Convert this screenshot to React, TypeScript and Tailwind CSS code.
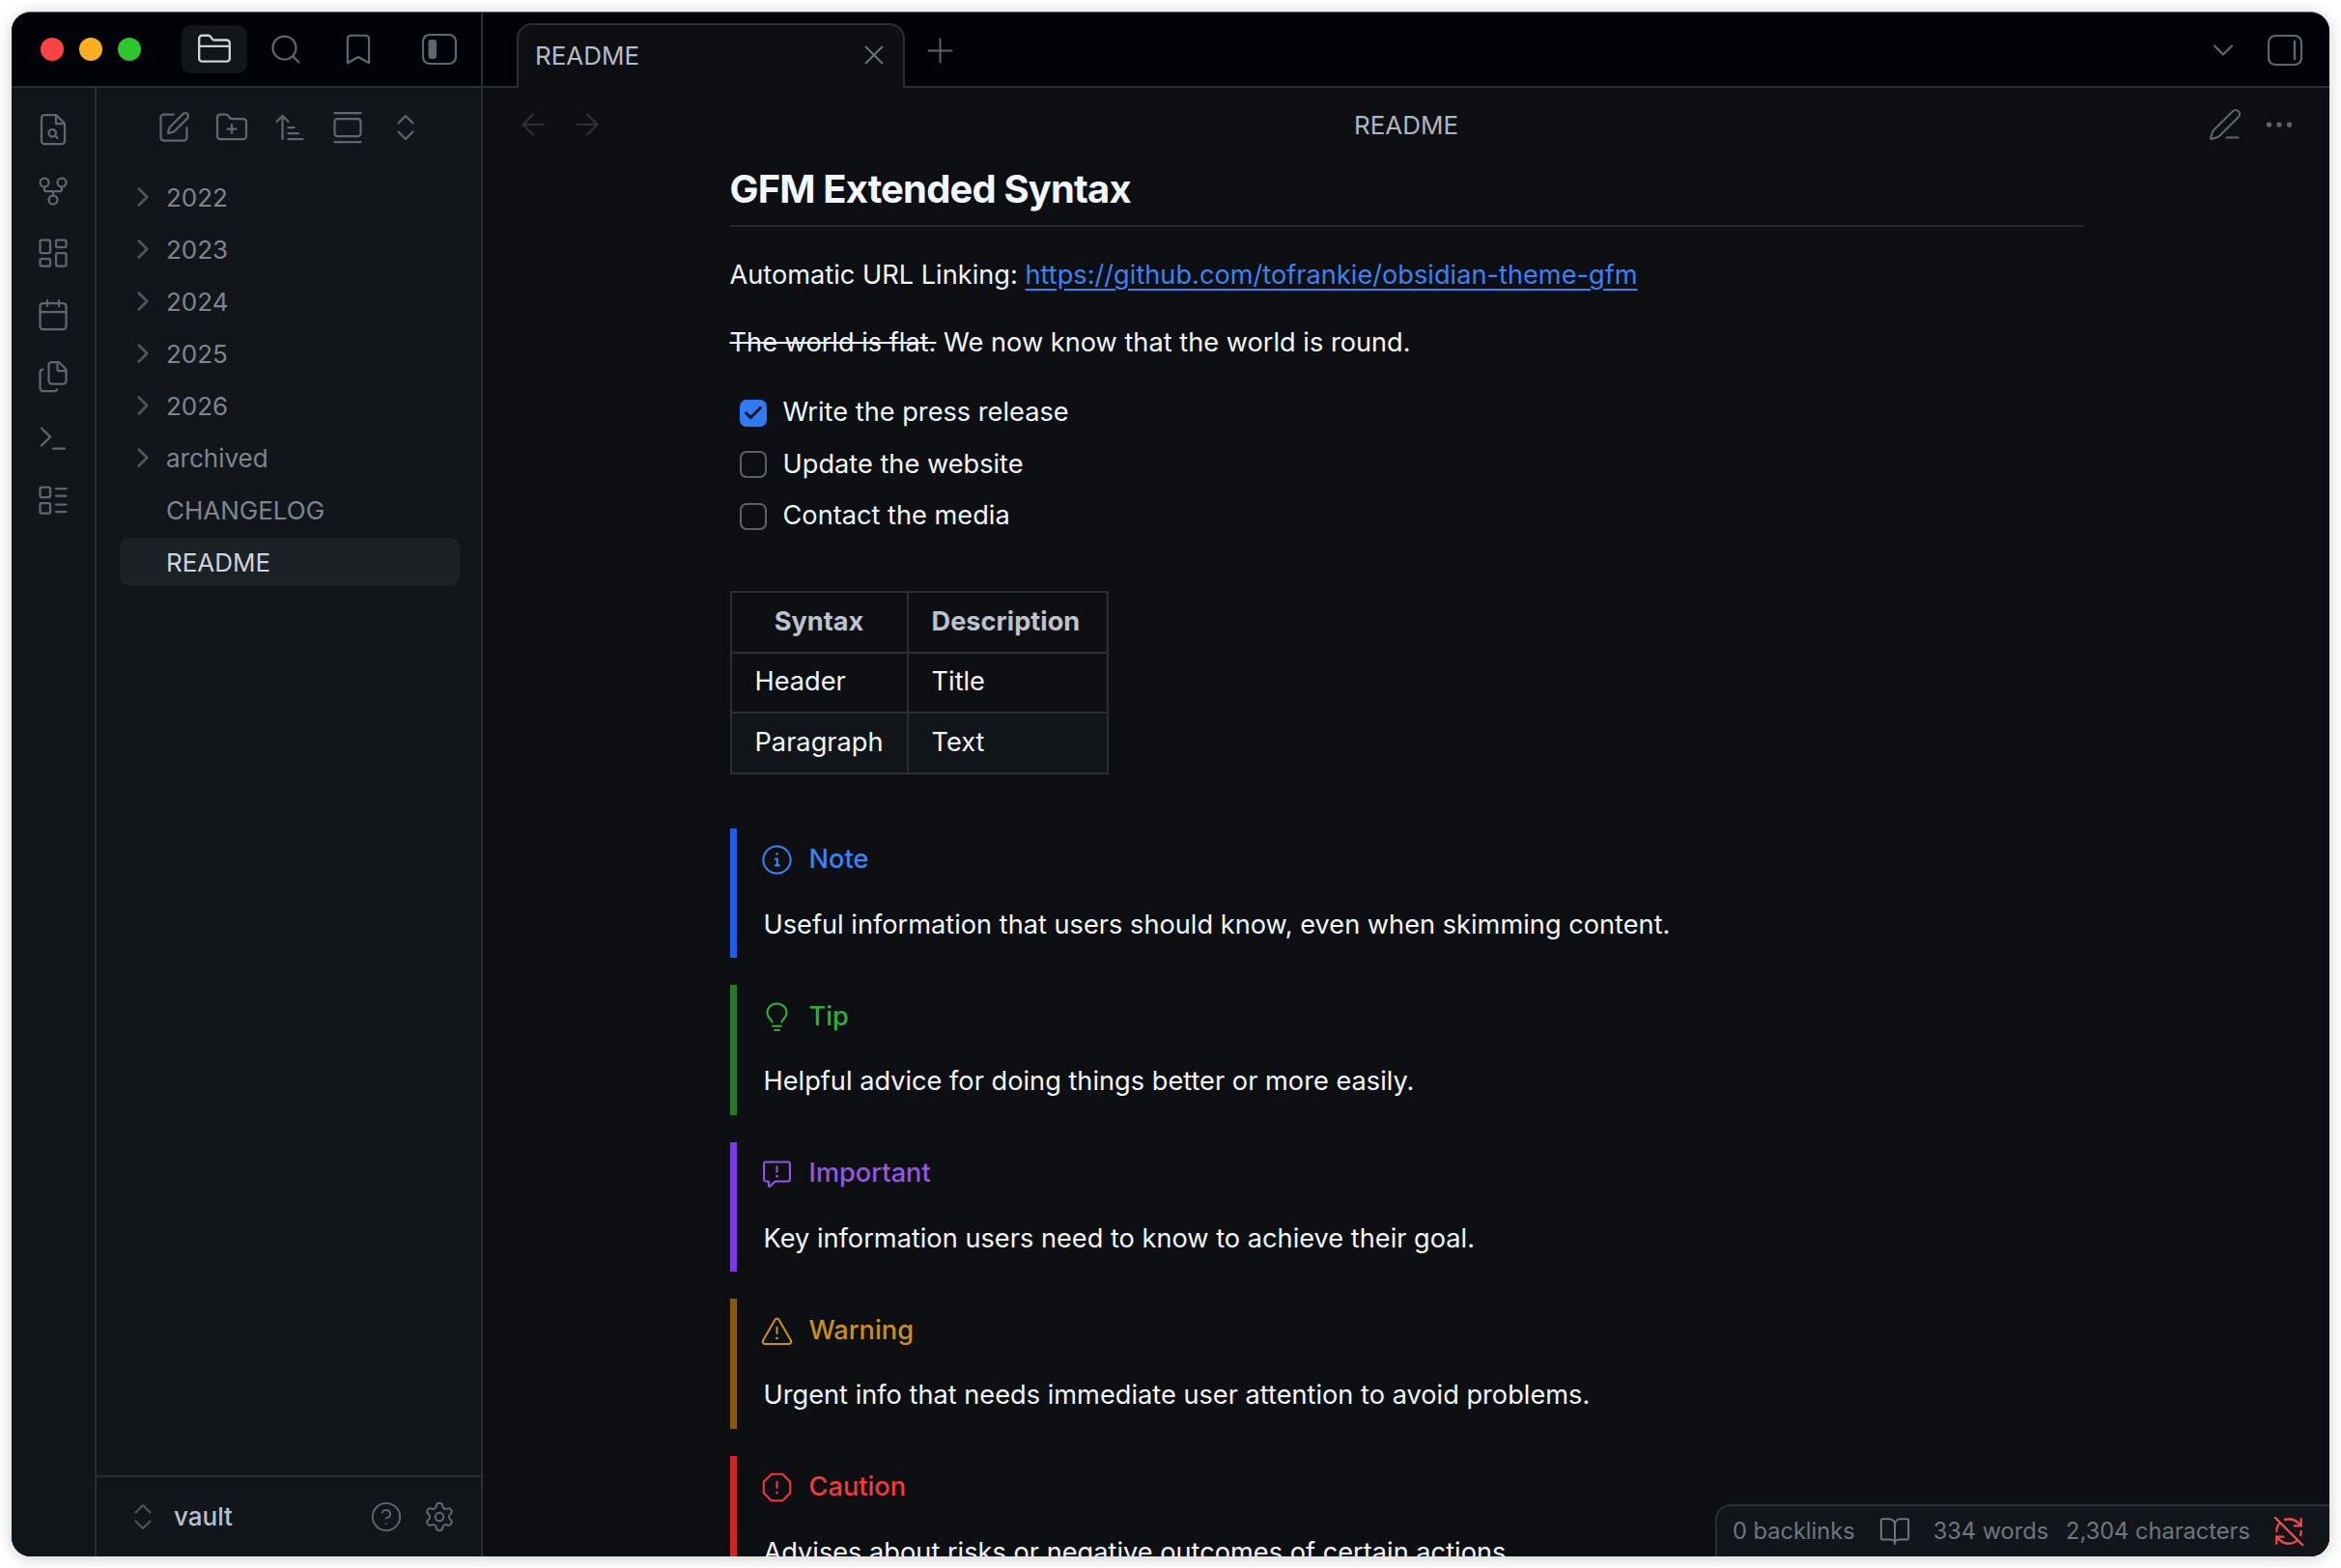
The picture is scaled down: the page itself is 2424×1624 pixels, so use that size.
import React from "react";
import {
  GitFork, LayoutDashboard, Calendar, Files, Terminal, LayoutList, SquarePen, FolderPlus, ArrowUpNarrowWide,
  GalleryVertical, ChevronsUpDown, ChevronRight, FolderClosed, Search, Bookmark, X, Plus, ArrowLeft, ArrowRight,
  ChevronDown, PenLine, Ellipsis, CircleHelp, Settings, BookOpen, RefreshCwOff, Check,
} from "lucide-react";
import { GoInfo, GoLightBulb, GoReport, GoAlert, GoStop } from "react-icons/go";

const FileSearchIcon = () => (
  <svg width="36" height="36" viewBox="0 0 24 24" fill="none" stroke="currentColor" strokeWidth="1.5" strokeLinecap="round" strokeLinejoin="round">
    <path d="M14 2H6a2 2 0 0 0-2 2v16a2 2 0 0 0 2 2h12a2 2 0 0 0 2-2V8z" />
    <path d="M14 2v6h6" />
    <circle cx="11.5" cy="14.5" r="2.5" />
    <path d="M13.3 16.3 15 18" />
  </svg>
);

const PanelLeft = () => (
  <svg width="36" height="34" viewBox="0 0 36 34" fill="none">
    <rect x="1" y="2" width="34" height="30" rx="7" stroke="currentColor" strokeWidth="2.2" />
    <rect x="6.5" y="7" width="8.5" height="20" rx="3" fill="currentColor" />
  </svg>
);

const PanelRight = () => (
  <svg width="36" height="34" viewBox="0 0 36 34" fill="none">
    <rect x="1" y="2" width="34" height="30" rx="7" stroke="currentColor" strokeWidth="2.2" />
    <path d="M28 8v18" stroke="currentColor" strokeWidth="2.4" strokeLinecap="round" />
  </svg>
);

const ribbon = [
  <FileSearchIcon key="a" />,
  <GitFork key="b" size={36} strokeWidth={1.5} />,
  <LayoutDashboard key="c" size={36} strokeWidth={1.5} />,
  <Calendar key="d" size={36} strokeWidth={1.5} />,
  <Files key="e" size={36} strokeWidth={1.5} />,
  <Terminal key="f" size={36} strokeWidth={1.5} />,
  <LayoutList key="g" size={36} strokeWidth={1.5} />,
];

const tree = ["2022", "2023", "2024", "2025", "2026", "archived"];

const callouts = [
  { title: "Note", body: "Useful information that users should know, even when skimming content.", bar: "border-[#1f5fe8]", text: "text-[#3b82f6]", icon: <GoInfo size={33} /> },
  { title: "Tip", body: "Helpful advice for doing things better or more easily.", bar: "border-[#277a2c]", text: "text-[#2fae3c]", icon: <GoLightBulb size={33} /> },
  { title: "Important", body: "Key information users need to know to achieve their goal.", bar: "border-[#7a3be0]", text: "text-[#9158e8]", icon: <GoReport size={33} /> },
  { title: "Warning", body: "Urgent info that needs immediate user attention to avoid problems.", bar: "border-[#8a5a0b]", text: "text-[#c98f1e]", icon: <GoAlert size={33} /> },
  { title: "Caution", body: "Advises about risks or negative outcomes of certain actions.", bar: "border-[#d0242b]", text: "text-[#ef3b3b]", icon: <GoStop size={33} /> },
];

export default function App() {
  return (
    <div className="w-[2424px] h-[1624px] bg-white p-[12px] overflow-hidden font-['Inter',sans-serif] text-[26px] font-[440] antialiased">
      <div className="relative w-full h-full rounded-[20px] overflow-hidden flex flex-col bg-[#0d0f13] border-t border-[#5c5f64] shadow-[0_2px_16px_rgba(0,0,0,0.2)]">
        {/* title bar */}
        <div className="h-[78px] shrink-0 flex bg-[#010308]">
          <div className="w-[488px] shrink-0 border-r-2 border-[#2a2e35] border-b-2 flex items-center pl-[30px]">
            <span className="w-[24px] h-[24px] rounded-full bg-[#ff4242]" />
            <span className="w-[24px] h-[24px] rounded-full bg-[#ffae22] ml-[16px]" />
            <span className="w-[24px] h-[24px] rounded-full bg-[#2ec52e] ml-[16px]" />
            <div className="ml-[42px] w-[68px] h-[50px] rounded-[10px] bg-[#12151a] flex items-center justify-center text-[#c9d1d9]">
              <FolderClosed size={38} strokeWidth={1.5} />
            </div>
            <div className="ml-[22px] text-[#5f6670]"><Search size={36} strokeWidth={1.5} /></div>
            <div className="ml-[38px] text-[#5f6670]"><Bookmark size={38} strokeWidth={1.4} /></div>
            <div className="ml-[47px] text-[#5f6670]"><PanelLeft /></div>
          </div>
          <div className="flex-1 flex relative items-end">
            <div className="w-[35px] h-[2px] bg-[#2a2e35]" />
            <div className="w-[402px] h-[67px] shrink-0 rounded-t-[16px] border-2 border-b-0 border-[#2a2e35] bg-[#0d0f13] flex items-center pl-[17px] pr-[13px] pb-[3px] text-[#b4bbc6]">
              <span className="flex-1">README</span>
              <X size={34} strokeWidth={1.4} className="text-[#6b727c]" />
            </div>
            <div className="flex-1 self-stretch flex items-center border-b-2 border-[#2a2e35] pl-[16px]">
              <Plus size={41} strokeWidth={1.1} className="mt-[2px] text-[#5f6670]" />
              <div className="ml-auto mr-[28px] mt-[2px] flex items-center gap-[28px] text-[#5f6670]">
                <ChevronDown size={36} strokeWidth={1.5} />
                <PanelRight />
              </div>
            </div>
          </div>
        </div>

        {/* body */}
        <div className="flex-1 flex min-h-0">
          {/* ribbon */}
          <div className="w-[88px] shrink-0 bg-[#12161b] border-r-2 border-[#2a2e35] flex flex-col items-center pt-[25px] gap-[28px] text-[#5f6670]">
            {ribbon}
          </div>

          {/* sidebar */}
          <div className="w-[400px] shrink-0 bg-[#12161b] border-r-2 border-[#2a2e35] flex flex-col">
            <div className="h-[76px] shrink-0 flex items-center pl-[62px] gap-[24px] pt-[6px] text-[#5f6670]">
              <SquarePen size={36} strokeWidth={1.5} />
              <FolderPlus size={36} strokeWidth={1.5} />
              <ArrowUpNarrowWide size={36} strokeWidth={1.5} />
              <GalleryVertical size={36} strokeWidth={1.5} />
              <ChevronsUpDown size={36} strokeWidth={1.5} />
            </div>
            <div className="flex-1 flex flex-col gap-[4px] pt-[12px] pl-[24px] pr-[22px]">
              {tree.map((t) => (
                <div key={t} className="h-[50px] shrink-0 flex items-center text-[#7d8590] pl-[7px]">
                  <ChevronRight size={34} strokeWidth={1.9} className="text-[#50555e] mr-[7px]" />
                  <span>{t}</span>
                </div>
              ))}
              <div className="h-[50px] shrink-0 flex items-center text-[#7d8590] pl-[48px]">CHANGELOG</div>
              <div className="h-[50px] shrink-0 flex items-center text-[#cdd3dc] pl-[48px] bg-[#1c2126] rounded-[10px]">README</div>
            </div>
            <div className="h-[84px] shrink-0 border-t-2 border-[#2a2e35] flex items-center pl-[30px] pr-[26px] pb-[1px]">
              <ChevronsUpDown size={36} strokeWidth={1.4} className="text-[#50555e]" />
              <span className="ml-[14px] font-medium text-[#b8c0cc]">vault</span>
              <CircleHelp size={34} strokeWidth={1.3} className="ml-auto mr-[-1px] text-[#5f6670]" />
              <Settings size={34} strokeWidth={1.4} className="ml-[22px] text-[#5f6670]" />
            </div>
          </div>

          {/* main */}
          <div className="flex-1 min-w-0 flex flex-col bg-[#0d0f13]">
            <div className="h-[76px] shrink-0 flex items-center px-[34px]">
              <div className="flex items-center gap-[20px] text-[#2c3037]">
                <ArrowLeft size={36} strokeWidth={1.4} />
                <ArrowRight size={36} strokeWidth={1.4} />
              </div>
              <span className="flex-1 text-center text-[#aeb5c0]">README</span>
              <div className="flex items-center gap-[20px] text-[#5f6670]">
                <PenLine size={36} strokeWidth={1.4} />
                <Ellipsis size={36} strokeWidth={1.5} />
              </div>
            </div>
            <div className="flex-1 min-h-0 pl-[255.5px] pr-[255.5px] overflow-hidden text-[27.2px] text-[#f0f6fc]">
              <h1 className="text-[40px] leading-[54px] font-bold tracking-[-0.85px] pt-[2px] pb-[10px] border-b-2 border-[#25292f]">GFM Extended Syntax</h1>
              <p className="mt-[22.5px] leading-[54px]">
                Automatic URL Linking: <a className="text-[#3b82f6] underline underline-offset-[5px]">https://github.com/tofrankie/obsidian-theme-gfm</a>
              </p>
              <p className="mt-[16px] leading-[54px]"><s>The world is flat.</s> We now know that the world is round.</p>
              <div className="mt-[19.5px] flex flex-col">
                {[["Write the press release", true], ["Update the website", false], ["Contact the media", false]].map(([t, c]) => (
                  <div key={t as string} className="h-[53.5px] flex items-center pl-[10px]">
                    {c ? (
                      <span className="w-[28px] h-[28px] rounded-[7px] bg-[#2f7bf6] flex items-center justify-center text-[#0d0f13]"><Check size={22} strokeWidth={3.2} /></span>
                    ) : (
                      <span className="w-[28px] h-[28px] rounded-[7px] border-2 border-[#5a616b]" />
                    )}
                    <span className="ml-[17px]">{t as string}</span>
                  </div>
                ))}
              </div>
              <table className="mt-[50.5px] border-collapse border-2 border-[#2a2e35] text-[#f0f6fc]">
                <thead>
                  <tr className="h-[62.5px]">
                    <th className="w-[183px] border-2 border-[#2a2e35] text-center font-bold text-[#bcc3ce]">Syntax</th>
                    <th className="w-[207px] border-2 border-[#2a2e35] text-left pl-[24px] font-bold text-[#bcc3ce]">Description</th>
                  </tr>
                </thead>
                <tbody>
                  <tr className="h-[62.5px]">
                    <td className="border-2 border-[#2a2e35] pl-[24px]">Header</td>
                    <td className="border-2 border-[#2a2e35] pl-[24px]">Title</td>
                  </tr>
                  <tr className="h-[62.5px] bg-[#12161b]">
                    <td className="border-2 border-[#2a2e35] pl-[24px]">Paragraph</td>
                    <td className="border-2 border-[#2a2e35] pl-[24px]">Text</td>
                  </tr>
                </tbody>
              </table>
              <div className="mt-[56px] flex flex-col gap-[28px]">
                {callouts.map((c) => (
                  <div key={c.title} className={`shrink-0 h-[134.5px] border-l-[7px] ${c.bar} pl-[28px] pt-[13px]`}>
                    <div className={`h-[40px] flex items-center font-medium ${c.text}`}>
                      <span className="w-[28px] flex justify-center"><span className="shrink-0">{c.icon}</span></span>
                      <span className="ml-[19px]">{c.title}</span>
                    </div>
                    <p className="mt-[27px] leading-[40px]">{c.body}</p>
                  </div>
                ))}
              </div>
            </div>
          </div>
        </div>

        {/* status bar */}
        <div className="absolute right-0 bottom-0 w-[636px] h-[54px] bg-[#12161b] border-t-2 border-l-2 border-[#2a2e35] rounded-tl-[16px] flex items-center pl-[16px] text-[23.6px] text-[#6e7681]">
          <span>0 backlinks</span>
          <BookOpen size={34} strokeWidth={1.4} className="ml-[24px]" />
          <span className="ml-[23px]">334 words</span>
          <span className="ml-[18px]">2,304 characters</span>
          <RefreshCwOff size={34} strokeWidth={1.6} className="ml-[23px] text-[#ef4b4b]" />
        </div>
      </div>
    </div>
  );
}
